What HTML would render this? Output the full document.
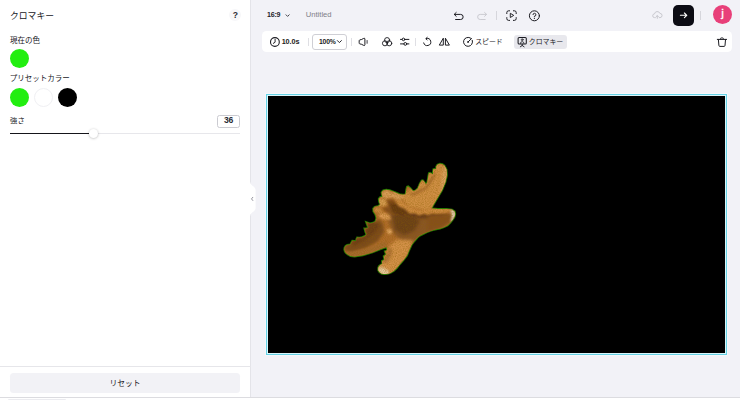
<!DOCTYPE html>
<html lang="ja">
<head>
<meta charset="utf-8">
<title>Chroma key</title>
<style>
*{box-sizing:border-box;margin:0;padding:0}
html,body{width:740px;height:400px;overflow:hidden;background:#fff}
body{font-family:"Liberation Sans",sans-serif;color:#1c1c22;position:relative}
.abs{position:absolute}
#main{left:251px;top:0;width:489px;height:397px;background:#f2f2f7}
#panel{left:0;top:0;width:251px;height:397px;background:#fff;border-right:1px solid #e4e4e9}
#bottomline{left:0;top:396.5px;width:740px;height:1px;background:#dcdce0}
#bottomstub{left:8px;top:398.6px;width:58px;height:2px;background:#ececf0;border-radius:1px}
.circ{border-radius:50%;width:19.4px;height:19.4px}
#help{left:229.3px;top:9.2px;width:12px;height:12px;border-radius:50%;background:#f7f7f9;font-size:8.6px;font-weight:bold;text-align:center;line-height:12.6px;color:#2a2a32}
#track{left:10px;top:133px;width:230px;height:1px;background:#e7e7eb}
#fill{left:10px;top:132.6px;width:79.6px;height:1.5px;background:#15151a}
#thumb{left:88.7px;top:128.5px;width:9.3px;height:9.3px;border-radius:50%;background:#fff;box-shadow:0 .4px 2.6px rgba(0,0,0,.3)}
#val{left:217.3px;top:115.1px;width:22.4px;height:12.6px;border:1px solid #cbcbd1;border-radius:2.5px;font-size:8.6px;font-weight:bold;text-align:center;line-height:9.4px;color:#2a2a33;letter-spacing:-.2px}
#pline{left:0;top:366px;width:251px;height:1px;background:#e6e6ea}
#reset{left:10.2px;top:373px;width:229.8px;height:19.6px;background:#f2f2f6;border-radius:3.5px}
#tab{left:249.4px;top:181.6px}
#toolbar{left:261.6px;top:30.8px;width:470.3px;height:21.1px;background:#fff;border-radius:4.6px}
.vdiv{width:1px;background:#dfdfe4}
#ratio{left:267px;top:10.1px;font-size:7.05px;font-weight:bold;color:#22222a;line-height:9px;letter-spacing:-.22px}
#untitled{left:305.7px;top:9.8px;font-size:7.65px;color:#7f7f88;line-height:9px}
#dur{left:281.7px;top:37.1px;font-size:7.25px;font-weight:bold;color:#1c1c22;line-height:9px;letter-spacing:-.1px}
#zoombox{left:312.3px;top:34.2px;width:34.3px;height:15.5px;border:1px solid #cfcfd5;border-radius:3px;background:#fff}
#zoomtxt{left:318.9px;top:37.2px;font-size:6.85px;font-weight:bold;line-height:9px;letter-spacing:-.15px}
#chromabtn{left:514.1px;top:34.7px;width:52.5px;height:14px;background:#e8e8ed;border-radius:3px}
#export{left:673px;top:4.8px;width:21px;height:21px;border-radius:5px;background:#0c0c14}
#avatar{left:713px;top:4.95px;width:19px;height:19px;border-radius:50%;background:#e83f79;color:#fff;font-size:11.8px;text-align:center;line-height:17.6px;-webkit-text-stroke:.3px #fff;text-indent:.3px}
#canvas{left:266px;top:94px;width:461px;height:261px;background:#000;border:1px solid #66d2e5;box-shadow:inset 0 0 0 1px #d9f6fb, 0 0 0 .6px rgba(255,255,255,.7)}
</style>
</head>
<body>
<div id="main" class="abs"></div>
<div id="panel" class="abs"></div>
<div id="bottomline" class="abs"></div>
<div id="bottomstub" class="abs"></div>

<!-- left panel -->
<div id="help" class="abs">?</div>
<div class="abs circ" style="left:9.7px;top:48.8px;background:#22ee10"></div>
<div class="abs circ" style="left:9.7px;top:87.7px;background:#22ee10"></div>
<div class="abs circ" style="left:33.7px;top:87.7px;background:#fff;border:1px solid #f0f0f3"></div>
<div class="abs circ" style="left:57.7px;top:87.7px;background:#000"></div>
<div id="track" class="abs"></div>
<div id="fill" class="abs"></div>
<div id="thumb" class="abs"></div>
<div id="val" class="abs">36</div>
<div id="pline" class="abs"></div>
<div id="reset" class="abs"></div>

<!-- collapse tab -->
<svg id="tab" class="abs" width="8" height="34" viewBox="0 0 8 34">
  <path d="M0 0 H1.2 C1.2 3.4 6.6 4.6 6.6 8 L6.6 26 C6.6 29.4 1.2 30.6 1.2 34 H0 Z" fill="#fff"/>
  <path d="M3.8 15.3 L2.5 16.9 L3.8 18.5" fill="none" stroke="#80808a" stroke-width=".85" stroke-linecap="round" stroke-linejoin="round"/>
</svg>

<!-- top bar -->
<div id="ratio" class="abs">16:9</div>
<div id="untitled" class="abs">Untitled</div>

<div class="abs vdiv" style="left:496px;top:11px;height:9px;background:#d6d6dc"></div>

<div id="export" class="abs"></div>
<div class="abs vdiv" style="left:700.2px;top:10.8px;height:9px;background:#d6d6dc"></div>
<div id="avatar" class="abs">j</div>

<!-- toolbar -->
<div id="toolbar" class="abs"></div>
<div id="dur" class="abs">10.0s</div>
<div class="abs vdiv" style="left:307.8px;top:37.5px;height:8.5px"></div>
<div id="zoombox" class="abs"></div>
<div id="zoomtxt" class="abs">100%</div>
<div class="abs vdiv" style="left:351.2px;top:37.5px;height:8.5px"></div>

<div class="abs vdiv" style="left:415.2px;top:37.5px;height:8.5px"></div>
<div id="chromabtn" class="abs"></div>
<svg class="abs" style="left:0;top:0" width="740" height="400" viewBox="0 0 740 400">
<g fill="none" stroke="#1c1c22" stroke-width="1.05" stroke-linecap="round" stroke-linejoin="round">
  <!-- chroma icon -->
  <rect x="518.1" y="37.4" width="8.2" height="6.6" rx="1.1"/>
  <circle cx="522.2" cy="39.7" r=".9" stroke-width=".8"/>
  <path d="M520.4 43.4 A1.8 1.8 0 0 1 524 43.4" stroke-width=".8"/>
  <path d="M522.2 44.2 V45.6 M520.3 46.8 L522.2 45.5 L524.1 46.8" stroke-width=".9"/>
</g>
</svg>


<!-- canvas -->
<div id="canvas" class="abs"></div>
<svg class="abs" style="left:0;top:0" width="740" height="400" viewBox="0 0 740 400">
<g fill="none" stroke="#1c1c22" stroke-width="1" stroke-linecap="round" stroke-linejoin="round">
  <!-- 16:9 chevron -->
  <path d="M286 14.8 L287.6 16.4 L289.2 14.8" stroke="#33333a" stroke-width=".9"/>
  <!-- undo -->
  <path d="M456.2 12.5 L454.2 14.4 L456.2 16.3"/>
  <path d="M454.4 14.4 H460.6 A2.55 2.55 0 0 1 460.6 19.5 H455.6"/>
  <!-- redo (disabled) -->
  <g stroke="#cbcbd1">
    <path d="M484.6 12.5 L486.6 14.4 L484.6 16.3"/>
    <path d="M486.4 14.4 H480.2 A2.55 2.55 0 0 0 480.2 19.5 H485.2"/>
  </g>
  <!-- record frame -->
  <path d="M506.8 13.6 V12.6 A1.8 1.8 0 0 1 508.6 10.8 H509.6"/>
  <path d="M513.4 10.8 H514.4 A1.8 1.8 0 0 1 516.2 12.6 V13.6"/>
  <path d="M516.2 17.6 V18.6 A1.8 1.8 0 0 1 514.4 20.4 H513.4"/>
  <path d="M509.6 20.4 H508.6 A1.8 1.8 0 0 1 506.8 18.6 V17.6"/>
  <path d="M510.3 13.7 V17.5 L513.4 15.6 Z" stroke-width=".95"/>
  <!-- help -->
  <circle cx="534.4" cy="15.8" r="5"/>
  <path d="M533 14.6 A1.45 1.45 0 1 1 534.4 16.2 V16.9" stroke-width=".95"/>
  <!-- cloud -->
  <g stroke="#c6c6cc" stroke-width=".95">
    <path d="M655.3 17.6 H654.6 A1.85 1.85 0 0 1 654.5 13.9 A2.8 2.8 0 0 1 659.9 13.4 A2.1 2.1 0 0 1 660 17.6 H659.3"/>
    <path d="M657.3 18.4 V15.7 M656.1 16.8 L657.3 15.6 L658.5 16.8"/>
  </g>
  <!-- export arrow -->
  <path d="M680.4 15.3 H686.6 M684.4 13 L686.8 15.3 L684.4 17.6" stroke="#fff" stroke-width="1.1"/>
  <!-- clock -->
  <circle cx="274.9" cy="42" r="4.4" stroke-width="1.08"/>
  <path d="M275.1 39.3 V42.2 L273.3 43.4" stroke-width=".95"/>
  <!-- zoom chevron -->
  <path d="M337.4 40.6 L339.4 42.6 L341.4 40.6" stroke-width=".95"/>
  <!-- speaker -->
  <path d="M359.2 40.6 A.8 .8 0 0 1 359.7 39.9 L361.3 39.6 L363.7 38.4 A.8 .8 0 0 1 364.9 39 V44.8 A.8 .8 0 0 1 363.7 45.4 L361.3 44.2 L359.7 43.9 A.8 .8 0 0 1 359.2 43.2 Z"/>
  <path d="M367.1 40.5 V43.3" stroke-width="1" stroke="#3a3a42"/>
  <!-- filters -->
  <circle cx="387.1" cy="40.1" r="2.55" stroke-width=".92"/>
  <circle cx="385" cy="43.3" r="2.55" stroke-width=".92"/>
  <circle cx="389.2" cy="43.3" r="2.55" stroke-width=".92"/>
  <!-- sliders -->
  <path d="M400.5 39.4 H402 M404.9 39.4 H408.9"/>
  <circle cx="403.5" cy="39.4" r="1.3"/>
  <path d="M400.5 43.9 H403.8 M406.8 43.9 H408.9"/>
  <circle cx="405.3" cy="43.9" r="1.4"/>
  <!-- rotate -->
  <path d="M426.4 38.45 A3.6 3.6 0 1 1 423.7 42.9"/>
  <path d="M427.2 37.4 L425.8 38.6 L427.1 40"/>
  <!-- flip -->
  <path d="M443.3 38.6 V45.1 H439.7 Z"/>
  <path d="M445.4 38.6 V45.1 H449 Z"/>
  <!-- speed -->
  <path d="M470.6 38.1 A4.5 4.5 0 1 0 472.3 40.3"/>
  <path d="M468.1 41.9 L471.6 38.5"/>
  <circle cx="468.1" cy="41.9" r=".95" fill="#1c1c22" stroke="none"/>
  <!-- trash -->
  <path d="M717.3 39.4 H726.6"/>
  <path d="M720.6 39.2 V38.5 A.6 .6 0 0 1 721.2 37.9 H722.7 A.6 .6 0 0 1 723.3 38.5 V39.2" stroke-width=".9"/>
  <path d="M718.4 39.7 L718.9 45.5 A1 1 0 0 0 719.9 46.4 H724 A1 1 0 0 0 725 45.5 L725.5 39.7"/>
</g>
<circle cx="534.4" cy="18.5" r=".62" fill="#1c1c22"/>
</svg>

<svg class="abs" style="left:330px;top:150px" width="140" height="140" viewBox="330 150 140 140">
<defs>
<clipPath id="sc"><path d="M402.8 194.8 L405.6 194.6 L406.2 190.0 L407.0 186.8 L408.2 186.4 L410.4 188.2 L412.8 191.0 L415.2 190.8 L417.8 188.6 L419.8 183.6 L421.6 180.6 L422.8 180.3 L424.6 182.2 L426.0 184.8 L427.4 182.0 L428.2 177.0 L428.9 173.3 L430.0 172.9 L431.8 173.8 L433.0 174.6 L433.0 171.6 L433.4 169.3 L434.4 168.9 L435.8 169.2 L436.3 169.0 L436.2 166.8 L437.4 164.8 L439.9 163.7 L442.4 164.2 L444.4 165.6 L446.5 169.6 L446.9 175.1 L445.4 182.0 L442.0 190.3 L437.1 198.5 L433.0 205.4 L431.6 208.4 L438.0 208.9 L446.7 208.9 L452.0 209.6 L454.6 211.4 L455.2 214.0 L454.4 217.0 L452.7 219.8 L450.0 223.0 L447.5 225.5 L444.0 227.2 L440.0 228.5 L435.0 229.6 L431.0 230.7 L427.0 232.2 L423.5 233.8 L420.0 235.6 L417.5 237.6 L414.0 241.5 L411.5 245.0 L409.0 250.5 L407.0 255.5 L403.6 260.0 L400.0 264.0 L396.8 268.0 L393.7 271.1 L390.4 272.9 L387.2 273.9 L384.0 274.1 L381.5 273.5 L379.4 272.0 L378.2 270.3 L378.2 268.0 L379.0 266.2 L380.6 264.8 L382.4 264.0 L382.2 262.4 L382.0 261.0 L383.4 260.4 L384.6 259.4 L384.0 257.8 L383.7 256.2 L385.0 255.4 L386.2 254.2 L385.4 252.8 L384.8 251.3 L386.0 250.8 L387.2 250.0 L386.5 247.0 L380.7 249.1 L372.5 252.4 L362.8 255.3 L354.6 256.5 L350.6 256.0 L348.1 254.8 L346.0 253.2 L344.9 251.6 L344.3 249.4 L344.6 247.5 L345.6 246.0 L347.3 245.0 L350.4 244.4 L351.4 242.4 L352.3 240.7 L354.4 241.0 L356.0 241.0 L356.4 239.0 L357.1 237.4 L359.6 237.6 L362.0 237.2 L364.6 236.2 L366.4 234.6 L365.2 231.4 L364.4 228.4 L366.6 228.2 L368.2 227.6 L367.0 224.6 L366.1 222.0 L368.4 222.8 L370.1 223.4 L373.0 222.8 L375.4 221.5 L376.4 218.0 L375.4 214.5 L373.4 211.4 L373.2 208.6 L374.8 206.8 L378.6 205.8 L380.2 204.6 L379.0 201.2 L378.8 198.8 L380.2 197.2 L382.6 196.8 L381.8 194.2 L381.6 192.2 L383.2 190.4 L386.2 189.8 L389.6 190.2 L392.7 191.3 L396.0 192.7 L399.6 194.2Z"/></clipPath>
<filter id="b1" x="-30%" y="-30%" width="160%" height="160%"><feGaussianBlur stdDeviation="1.6"/></filter>
<filter id="b2" x="-30%" y="-30%" width="160%" height="160%"><feGaussianBlur stdDeviation="2.6"/></filter>
<filter id="b0" x="-30%" y="-30%" width="160%" height="160%"><feGaussianBlur stdDeviation=".8"/></filter>
<filter id="bg" x="-10%" y="-10%" width="120%" height="120%"><feGaussianBlur stdDeviation=".45"/></filter>
<filter id="gr" x="0" y="0" width="100%" height="100%"><feTurbulence type="fractalNoise" baseFrequency=".9" numOctaves="2" seed="3" result="n"/><feColorMatrix type="matrix" values="0 0 0 0 .25  0 0 0 0 .12  0 0 0 0 0  0 0 0 -1.6 1.05"/></filter>
</defs>
<path d="M402.8 194.8 L405.6 194.6 L406.2 190.0 L407.0 186.8 L408.2 186.4 L410.4 188.2 L412.8 191.0 L415.2 190.8 L417.8 188.6 L419.8 183.6 L421.6 180.6 L422.8 180.3 L424.6 182.2 L426.0 184.8 L427.4 182.0 L428.2 177.0 L428.9 173.3 L430.0 172.9 L431.8 173.8 L433.0 174.6 L433.0 171.6 L433.4 169.3 L434.4 168.9 L435.8 169.2 L436.3 169.0 L436.2 166.8 L437.4 164.8 L439.9 163.7 L442.4 164.2 L444.4 165.6 L446.5 169.6 L446.9 175.1 L445.4 182.0 L442.0 190.3 L437.1 198.5 L433.0 205.4 L431.6 208.4 L438.0 208.9 L446.7 208.9 L452.0 209.6 L454.6 211.4 L455.2 214.0 L454.4 217.0 L452.7 219.8 L450.0 223.0 L447.5 225.5 L444.0 227.2 L440.0 228.5 L435.0 229.6 L431.0 230.7 L427.0 232.2 L423.5 233.8 L420.0 235.6 L417.5 237.6 L414.0 241.5 L411.5 245.0 L409.0 250.5 L407.0 255.5 L403.6 260.0 L400.0 264.0 L396.8 268.0 L393.7 271.1 L390.4 272.9 L387.2 273.9 L384.0 274.1 L381.5 273.5 L379.4 272.0 L378.2 270.3 L378.2 268.0 L379.0 266.2 L380.6 264.8 L382.4 264.0 L382.2 262.4 L382.0 261.0 L383.4 260.4 L384.6 259.4 L384.0 257.8 L383.7 256.2 L385.0 255.4 L386.2 254.2 L385.4 252.8 L384.8 251.3 L386.0 250.8 L387.2 250.0 L386.5 247.0 L380.7 249.1 L372.5 252.4 L362.8 255.3 L354.6 256.5 L350.6 256.0 L348.1 254.8 L346.0 253.2 L344.9 251.6 L344.3 249.4 L344.6 247.5 L345.6 246.0 L347.3 245.0 L350.4 244.4 L351.4 242.4 L352.3 240.7 L354.4 241.0 L356.0 241.0 L356.4 239.0 L357.1 237.4 L359.6 237.6 L362.0 237.2 L364.6 236.2 L366.4 234.6 L365.2 231.4 L364.4 228.4 L366.6 228.2 L368.2 227.6 L367.0 224.6 L366.1 222.0 L368.4 222.8 L370.1 223.4 L373.0 222.8 L375.4 221.5 L376.4 218.0 L375.4 214.5 L373.4 211.4 L373.2 208.6 L374.8 206.8 L378.6 205.8 L380.2 204.6 L379.0 201.2 L378.8 198.8 L380.2 197.2 L382.6 196.8 L381.8 194.2 L381.6 192.2 L383.2 190.4 L386.2 189.8 L389.6 190.2 L392.7 191.3 L396.0 192.7 L399.6 194.2Z" fill="none" stroke="#2e8a00" stroke-width="1.9" filter="url(#bg)" opacity=".9"/>
<g clip-path="url(#sc)">
<rect x="330" y="150" width="140" height="140" fill="#b06c2b"/>
<!-- top arm -->
<path d="M436 162 L449 166 L447 184 L436 204 L428 211 L408 207 L400 196 L412 188 L426 178 Z" fill="#d08f45" filter="url(#b1)"/>
<path d="M443.6 165 L447.6 170 L446.4 181 L440 195 L441.6 180 Z" fill="#dba361" filter="url(#b0)"/>
<path d="M408 193 L414 193 L419.6 189.4 L425.6 187 L428.6 181.6 L432.8 175.8 L436.2 170.6 L434.6 177 L431 183 L426.6 189 L420 192.6 L413.6 196 Z" fill="#8a4f1f" filter="url(#b0)" opacity=".55"/>
<!-- center/right underside shadow -->
<path d="M388 203 L402 205 L414 213 L430 214 L452 214 L453 221 L438 229 L422 235 L413 243 L402 241 L393 233 L388 220 Z" fill="#895426" filter="url(#b1)"/>
<path d="M392 215 L404 214.6 L414 217 L420 221 L414 231 L404 235 L395 230 Z" fill="#633a17" filter="url(#b1)" opacity=".8"/>
<path d="M404 213 L430 214.6 L448 214.4 L440 218 L420 218.4 L408 216.6 Z" fill="#5a3212" filter="url(#b0)" opacity=".7"/>
<path d="M389 202 L398 203.6 L408 212.6 L402 216 L392 212.6 Z" fill="#5c3110" filter="url(#b0)" opacity=".8"/>
<path d="M428 215.6 L449 214.6 L452 219 L442 227 L428 230.6 Z" fill="#86501f" filter="url(#b1)"/>
<!-- right arm ridge (light) -->
<path d="M394 200 L400 199 L406 205 L412 208 L418 210.4 L424 210 L432 208.6 L448 208 L453 210.6 L445 212.8 L436 213.4 L432 212.6 L428 215 L424 213 L419 215.6 L415 212.8 L410 213.4 L405 208.6 L399 206.4 Z" fill="#d08c42" filter="url(#b0)"/>
<path d="M450.6 209 L455.4 211 L456 216.6 L452.6 221.4 L450.4 221.6 L452 216 L451 212 Z" fill="#e6d6bb" filter="url(#b0)"/>
<!-- upper-left fingers -->
<path d="M380.6 196 L382.6 190 L389 190.2 L392 193.6 L394 191.4 L399 194 L404 195.6 L401 200 L395 199 L391 197.6 L386 199 Z" fill="#d89c58" filter="url(#b0)"/>
<path d="M377 203 L380 198 L386 199.6 L388 203 L385 206.6 L379.6 206.2 Z" fill="#d4994f" filter="url(#b0)"/>
<path d="M373 210.6 L375.4 207.4 L381 208.4 L383 211.6 L378 213.4 Z" fill="#cc8a40" filter="url(#b0)"/>
<path d="M378.6 214 L384 212.6 L390 215.6 L391 220 L385 219.6 L379.6 218 Z" fill="#dc9a54" filter="url(#b0)"/>
<path d="M386 229.6 L391 229 L392.4 233 L388.6 234.4 Z" fill="#e4a864" filter="url(#b0)"/>
<path d="M386 200 L392 199.6 L397 202.6 L392 205 L388 204 Z" fill="#744016" filter="url(#b0)" opacity=".75"/>
<path d="M382 208 L388 207 L391 212 L386 212 Z" fill="#744016" filter="url(#b0)" opacity=".65"/>
<!-- left arm -->
<path d="M344 246 L352 242 L357 238.6 L362 238 L367 235 L365 229.6 L369 228.4 L367 223.2 L375 222.4 L379 219 L383 224 L384 232 L378 241 L366 248 L352 252 L345 251 Z" fill="#7a4a1f" filter="url(#b1)"/>
<path d="M351 243 L357 238.6 L362 237.6 L367 235 L365 229.4 L369 228.2 L367 223 L375.6 222 L379 226 L374 233 L364 240.6 L354 245.4 Z" fill="#683b15" filter="url(#b0)" opacity=".85"/>
<path d="M347 253 L360 250.6 L374 246 L385 241.6 L388 246 L381 249.6 L368 254 L354 257 L348 255.6 Z" fill="#a56b2f" filter="url(#b0)"/>
<!-- bottom arm -->
<path d="M389 246 L397 239.6 L413 240 L409 252 L401 265 L391 274 L380 274.6 L377 268 L385 256 Z" fill="#d4914a" filter="url(#b1)"/>
<path d="M377 269 L381 266.4 L389 270.8 L389 275 L381 275.4 Z" fill="#e8cba0" filter="url(#b0)"/>
<path d="M383.4 262 L382.8 259.6 L386.2 257.4 L385.4 254 L389 252.4 L388 248.6 L392 248.4 L392 254 L389.4 259 L386.6 263.6 Z" fill="#99602c" filter="url(#b0)" opacity=".6"/>
<rect x="340" y="160" width="120" height="118" filter="url(#gr)" opacity=".5"/>
</g>
</svg>

<svg class="abs" style="left:0;top:0" width="740" height="400" viewBox="0 0 740 400">
<g fill="#17171d" font-family='"Liberation Sans", "Noto Sans CJK JP", sans-serif'>
<text x="10" y="19.2" font-size="8.8">クロマキー</text>
<text x="10" y="43.2" font-size="7.5">現在の色</text>
<text x="9.7" y="80.9" font-size="7.5">プリセットカラー</text>
<text x="10.1" y="123" font-size="7.3">強さ</text>
<text x="125" y="386" font-size="7.8" text-anchor="middle">リセット</text>
<text x="475.2" y="44" font-size="6.9">スピード</text>
<text x="528.8" y="44.1" font-size="6.9">クロマキー</text>
</g>
</svg>
</body>
</html>
